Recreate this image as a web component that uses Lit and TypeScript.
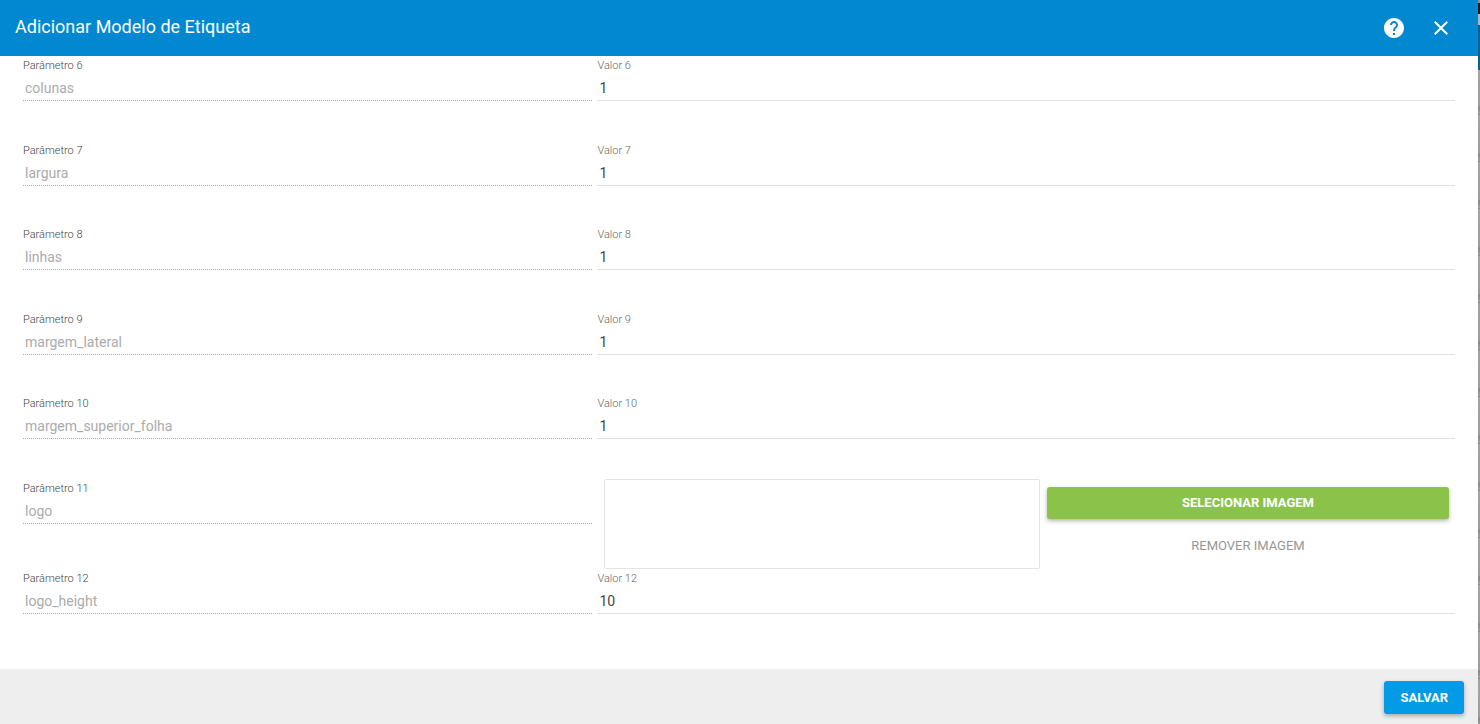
import { LitElement, html, css } from "lit";
import { customElement, property } from "lit/decorators.js";

interface Param {
  n: number;
  name: string;
  value?: string;
}

const PARAMS: Param[] = [
  { n: 6, name: "colunas", value: "1" },
  { n: 7, name: "largura", value: "1" },
  { n: 8, name: "linhas", value: "1" },
  { n: 9, name: "margem_lateral", value: "1" },
  { n: 10, name: "margem_superior_folha", value: "1" },
  { n: 11, name: "logo" },
  { n: 12, name: "logo_height", value: "10" },
];

@customElement("param-row")
class ParamRow extends LitElement {
  @property({ attribute: false }) param!: Param;

  static styles = css`
    :host {
      display: grid;
      grid-template-columns: 40% 1fr;
      align-items: start;
    }
    .cell {
      display: flex;
      flex-direction: column;
      min-width: 0;
      padding: 0 2px;
    }
    .name {
      padding-right: 3px;
    }
    label {
      font-size: 11px;
      font-weight: 300;
      line-height: 20px;
      color: #666;
    }
    .name label {
      color: #444;
    }
    input {
      box-sizing: border-box;
      width: 100%;
      height: 25px;
      margin: 0;
      padding: 0 2px;
      border: 0;
      border-bottom: 1px solid #e0e0e0;
      border-radius: 0;
      outline: 0;
      background: transparent;
      font: 400 14px/24px Roboto, sans-serif;
      color: #444;
    }
    input:disabled {
      border-bottom: 1px dotted #aaa;
      color: #ababab;
    }
    .image {
      display: grid;
      grid-template-columns: 52fr 48fr;
      gap: 7px;
      padding: 0 8px 0 9px;
    }
    .preview {
      box-sizing: border-box;
      height: 90px;
      border: 1px solid #e4e4e4;
      border-radius: 2px;
    }
    .actions {
      display: flex;
      flex-direction: column;
      gap: 11px;
      padding-top: 8px;
    }
    button {
      height: 32px;
      padding: 0 16px;
      border: 0;
      border-radius: 3px;
      background: transparent;
      font: 400 13px/32px Roboto, sans-serif;
      text-transform: uppercase;
      cursor: pointer;
    }
    .select {
      background: #8bc34a;
      color: #fff;
      font-weight: 700;
      box-shadow: 0 2px 4px rgba(0, 0, 0, 0.3);
    }
    .remove {
      color: #969696;
      cursor: default;
    }
  `;

  render() {
    const { n, name, value } = this.param;
    return html`
      <div class="cell name">
        <label for="name">Parâmetro ${n}</label>
        <input id="name" type="text" .value=${name} disabled />
      </div>
      ${value === undefined
        ? html`<div class="cell image">
            <div class="preview"></div>
            <div class="actions">
              <button class="select" type="button">Selecionar imagem</button>
              <button class="remove" type="button" disabled>Remover imagem</button>
            </div>
          </div>`
        : html`<div class="cell">
            <label for="value">Valor ${n}</label>
            <input id="value" type="text" .value=${value} />
          </div>`}
    `;
  }
}

@customElement("app-root")
class AppRoot extends LitElement {
  static styles = css`
    :host {
      display: flex;
      min-height: 100vh;
      font-family: Roboto, sans-serif;
      background: #fff;
    }
    .dialog {
      flex: 1;
      min-width: 0;
      display: flex;
      flex-direction: column;
    }
    header {
      display: flex;
      align-items: center;
      height: 56px;
      padding: 0 25px 0 15px;
      background: #0288d1;
      color: #fff;
    }
    h1 {
      flex: 1;
      margin: 0;
      padding-bottom: 2px;
      font-size: 18px;
      line-height: 24px;
      font-weight: 400;
    }
    .icon {
      display: flex;
      margin: 0 0 0 23px;
      padding: 0;
      border: 0;
      background: transparent;
      color: inherit;
      cursor: pointer;
    }
    .icon svg {
      width: 24px;
      height: 24px;
      fill: currentColor;
    }
    form {
      flex: 1;
      display: flex;
      flex-direction: column;
    }
    .rows {
      flex: 1;
      display: flex;
      flex-direction: column;
      padding: 0 21px 16px;
    }
    .row {
      flex: 1 0 64px;
    }
    .row.picture {
      flex: none;
    }
    footer {
      display: flex;
      justify-content: flex-end;
      padding: 12px 14px 10px;
      background: #eee;
    }
    .save {
      height: 33px;
      padding: 0 16px;
      border: 0;
      border-radius: 3px;
      background: #039be5;
      color: #fff;
      font: 700 13px/32px Roboto, sans-serif;
      text-transform: uppercase;
      box-shadow: 0 2px 4px rgba(0, 0, 0, 0.3);
      cursor: pointer;
    }
    /* sliver of the dimmed page behind the dialog */
    .behind {
      flex: none;
      width: 2px;
      display: flex;
      flex-direction: column;
    }
    .behind-top {
      height: 25px;
      background: linear-gradient(#8d8f99 3px, #2a1c14 3px, #2a1c14 14px, #b5b5b8 14px);
    }
    .behind-bar {
      height: 45px;
      background: #026293;
    }
    .behind-list {
      flex: 1;
      background: repeating-linear-gradient(
        #a3a3a3 0,
        #9c9c9c 36px,
        #868686 37px,
        #a0a0a0 44px,
        #888 44px,
        #888 45px,
        #a3a3a3 45px,
        #a3a3a3 47px
      );
    }
  `;

  render() {
    return html`
      <section class="dialog" role="dialog" aria-labelledby="title">
        <header>
          <h1 id="title">Adicionar Modelo de Etiqueta</h1>
          <button class="icon" type="button" aria-label="Ajuda">
            <svg viewBox="0 0 24 24">
              <path
                d="M12 2C6.48 2 2 6.48 2 12s4.480 10 10 10 10-4.480 10-10S17.520 2 12 2zm1 17h-2v-2h2v2zm2.070-7.750l-.9.920C13.450 12.900 13 13.500 13 15h-2v-.5c0-1.100.45-2.100 1.170-2.830l1.240-1.260c.37-.36.59-.86.59-1.410 0-1.100-.9-2-2-2s-2 .9-2 2H8c0-2.210 1.790-4 4-4s4 1.790 4 4c0 .88-.36 1.680-.93 2.250z"
              />
            </svg>
          </button>
          <button class="icon" type="button" aria-label="Fechar">
            <svg viewBox="0 0 24 24">
              <path
                d="M19 6.410L17.590 5 12 10.590 6.410 5 5 6.410 10.590 12 5 17.590 6.410 19 12 13.410 17.590 19 19 17.590 13.410 12z"
              />
            </svg>
          </button>
        </header>
        <form>
          <div class="rows">
            ${PARAMS.map(
              (p) => html`<param-row
                class=${p.value === undefined ? "row picture" : "row"}
                .param=${p}
              ></param-row>`
            )}
          </div>
          <footer><button class="save" type="button">Salvar</button></footer>
        </form>
      </section>
      <div class="behind" aria-hidden="true">
        <div class="behind-top"></div>
        <div class="behind-bar"></div>
        <div class="behind-list"></div>
      </div>
    `;
  }
}
